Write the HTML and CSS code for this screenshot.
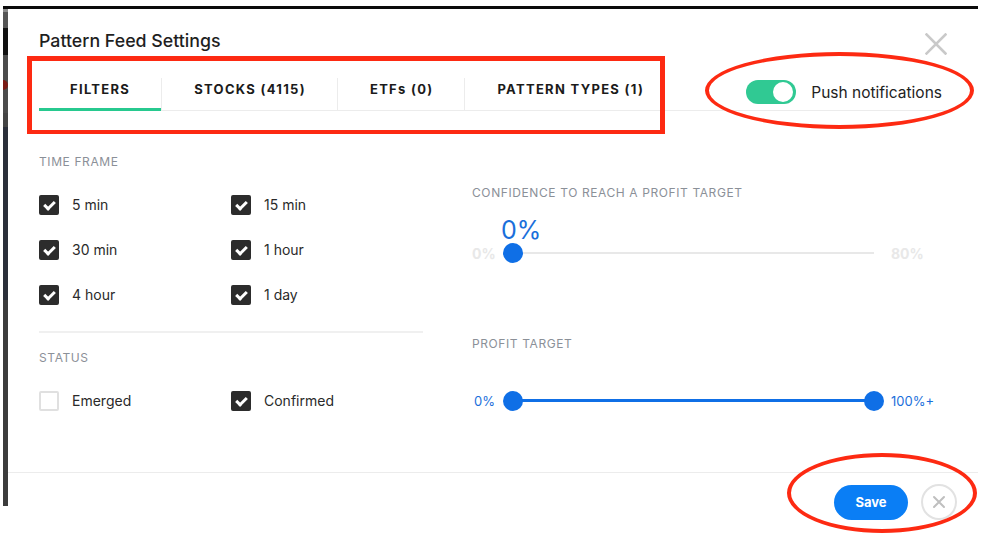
FILE: index.html
```html
<!DOCTYPE html>
<html lang="en">
<head>
    <meta charset="UTF-8">
    <title>Pattern Feed Settings</title>
    <link rel="stylesheet" href="styles.css">
</head>
<body>
    <div class="screen">
        <div class="backdrop-strip">
            <span class="seg seg-a"></span>
            <span class="seg seg-b"></span>
            <span class="seg seg-c"></span>
            <span class="seg seg-d"><i class="dot"></i></span>
            <span class="seg seg-e"></span>
            <span class="seg seg-f"></span>
            <span class="seg seg-g"></span>
        </div>

        <div class="modal">
            <div class="modal-header">
                <div class="title-row">
                    <h2 class="modal-title">Pattern Feed Settings</h2>
                    <button class="close-btn" aria-label="Close">
                        <svg width="22" height="22" viewBox="0 0 22 22">
                            <path d="M1.5 1.5 L20.5 20.5 M20.5 1.5 L1.5 20.5" stroke="#c9c9c9" stroke-width="2.6" stroke-linecap="square"/>
                        </svg>
                    </button>
                </div>

                <div class="tabs-row">
                    <ul class="tabs">
                        <li class="tab active">FILTERS</li>
                        <li class="tab">STOCKS (4115)</li>
                        <li class="tab">ETFs (0)</li>
                        <li class="tab">PATTERN TYPES (1)</li>
                    </ul>
                    <label class="push">
                        <span class="switch on"><span class="knob"></span></span>
                        Push notifications
                    </label>
                </div>
            </div>

            <div class="modal-body">
                <div class="filters-col">
                    <div class="section-label">TIME FRAME</div>
                    <div class="check-grid">
                        <label class="check"><span class="box checked"></span>5 min</label>
                        <label class="check"><span class="box checked"></span>15 min</label>
                        <label class="check"><span class="box checked"></span>30 min</label>
                        <label class="check"><span class="box checked"></span>1 hour</label>
                        <label class="check"><span class="box checked"></span>4 hour</label>
                        <label class="check"><span class="box checked"></span>1 day</label>
                    </div>

                    <div class="divider"></div>

                    <div class="section-label">STATUS</div>
                    <div class="check-grid">
                        <label class="check"><span class="box"></span>Emerged</label>
                        <label class="check"><span class="box checked"></span>Confirmed</label>
                    </div>
                </div>

                <div class="sliders-col">
                    <div class="section-label">CONFIDENCE TO REACH A PROFIT TARGET</div>
                    <div class="slider-value">0%</div>
                    <div class="slider slider-muted">
                        <span class="slider-min">0%</span>
                        <div class="track">
                            <span class="thumb thumb-left"></span>
                        </div>
                        <span class="slider-max">80%</span>
                    </div>

                    <div class="section-label profit-label">PROFIT TARGET</div>
                    <div class="slider slider-range">
                        <span class="slider-min">0%</span>
                        <div class="track">
                            <span class="fill"></span>
                            <span class="thumb thumb-left"></span>
                            <span class="thumb thumb-right"></span>
                        </div>
                        <span class="slider-max">100%+</span>
                    </div>
                </div>
            </div>

            <div class="modal-footer">
                <button class="save-btn">Save</button>
                <button class="cancel-btn" aria-label="Cancel">
                    <svg width="14" height="14" viewBox="0 0 14 14">
                        <path d="M2 2 L12 12 M12 2 L2 12" stroke="#bfbfbf" stroke-width="2" stroke-linecap="round"/>
                    </svg>
                </button>
            </div>
        </div>
    </div>

    <!-- red review marks -->
    <div class="mark mark-tabs"></div>
    <div class="mark mark-ellipse mark-push"></div>
    <div class="mark mark-ellipse mark-footer"></div>
</body>
</html>
```

FILE: styles.css
```css
* {
    margin: 0;
    padding: 0;
    box-sizing: border-box;
}

body {
    font-family: 'Inter', 'Liberation Sans', sans-serif;
    background: #fff;
    color: #222;
    position: relative;
    width: 994px;
    height: 546px;
    overflow: hidden;
}

/* Frame around the dialog */
.screen {
    display: flex;
    align-items: flex-start;
    width: 975px;
    margin: 6px 0 0 3px;
    border-top: 3px solid #0b0b0b;
}

.backdrop-strip {
    width: 5px;
    height: 497px;
    display: flex;
    flex-direction: column;
    flex-shrink: 0;
}

.seg {
    display: block;
    position: relative;
}

.seg-a { height: 3px; background: #8a8a8a; }
.seg-b { height: 16px; background: #555; }
.seg-c { height: 27px; background: #111; }
.seg-d { height: 58px; background: #4b4b4b; }
.seg-e { height: 14px; background: #444; }
.seg-f { height: 173px; background: #2b2f3a; }
.seg-g { flex: 1; background: #3c3c3c; }

.seg-d .dot {
    position: absolute;
    left: 0;
    top: 25px;
    width: 5px;
    height: 10px;
    background: #7a1a14;
    border-radius: 0 5px 5px 0;
}

.modal {
    flex: 1;
    background: #fff;
}

/* Header */
.modal-header {
    padding: 22px 31px 0;
}

.title-row {
    display: flex;
    justify-content: space-between;
    align-items: flex-start;
    height: 24px;
}

.modal-title {
    font-size: 17.8px;
    font-weight: 500;
    line-height: 20px;
    color: #1f1f1f;
}

.close-btn {
    border: none;
    background: none;
    width: 22px;
    height: 22px;
    margin-top: 2px;
    cursor: pointer;
}

.close-btn svg {
    display: block;
}

.tabs-row {
    display: flex;
    justify-content: space-between;
    align-items: flex-start;
    margin-top: 23px;
    border-bottom: 1px solid #ececec;
}

.tabs {
    display: flex;
    list-style: none;
}

.tab {
    position: relative;
    height: 32px;
    padding: 0 31px 10px 32px;
    line-height: 22px;
    font-size: 13px;
    font-weight: 700;
    letter-spacing: 1.3px;
    color: #1b1b1b;
    border-left: 1px solid #ececec;
}

.tab:first-child {
    padding-left: 31px;
    border-left: none;
}

.tab.active::after {
    content: '';
    position: absolute;
    left: 0;
    right: 0;
    bottom: -1px;
    height: 3px;
    background: #27c98f;
}

.push {
    display: flex;
    align-items: center;
    gap: 15px;
    margin: 2px 5px 0 0;
    font-size: 15.5px;
    color: #222;
}

.switch {
    width: 50px;
    height: 24px;
    border-radius: 12px;
    background: #d5d5d5;
    display: flex;
    align-items: center;
    padding: 0 3px;
}

.switch.on {
    background: #30c993;
    justify-content: flex-end;
}

.knob {
    width: 20px;
    height: 20px;
    border-radius: 50%;
    background: #fff;
}

/* Body */
.modal-body {
    display: grid;
    grid-template-columns: 384px 1fr;
    column-gap: 49px;
    padding: 0 31px 49px;
}

.filters-col {
    padding-top: 43px;
}

.sliders-col {
    padding-top: 74px;
}

.section-label {
    font-size: 12px;
    line-height: 16px;
    letter-spacing: 0.6px;
    color: #8b9098;
}

.check-grid {
    display: grid;
    grid-template-columns: 192px 192px;
    grid-auto-rows: 45px;
    margin-top: 12px;
}

.check {
    display: flex;
    align-items: center;
    gap: 13px;
    font-size: 14px;
    color: #2a2a2a;
}

.box {
    position: relative;
    width: 20px;
    height: 20px;
    border: 2px solid #e0e0e0;
    border-radius: 2px;
    background: #fff;
}

.box.checked {
    background: #2c2c2c;
    border-color: #2c2c2c;
}

.box.checked::after {
    content: '';
    position: absolute;
    left: 5px;
    top: 2px;
    width: 4px;
    height: 8px;
    border-right: 3px solid #fff;
    border-bottom: 3px solid #fff;
    transform: rotate(45deg);
}

.divider {
    height: 2px;
    background: #f0f0f0;
    margin: 14px 0 17px;
}

/* Sliders */
.slider-value {
    margin: 15px 0 0 29px;
    font-size: 25px;
    line-height: 28px;
    color: #1a6fdb;
}

.slider {
    display: flex;
    align-items: center;
    height: 20px;
    margin-top: -1px;
    font-size: 13px;
}

.slider-min {
    width: 23px;
    margin-right: 8px;
    text-align: right;
}

.slider-max {
    margin-left: 7px;
}

.slider-muted .slider-min,
.slider-muted .slider-max {
    font-size: 14px;
    font-weight: 700;
    color: #e8e8e8;
}

.slider-range .slider-min,
.slider-range .slider-max {
    color: #1a6fdb;
}

.track {
    position: relative;
    width: 381px;
    height: 20px;
}

.track::before {
    content: '';
    position: absolute;
    left: 10px;
    right: 10px;
    top: 9px;
    height: 2px;
    background: #e8e8e8;
}

.fill {
    position: absolute;
    left: 10px;
    right: 10px;
    top: 8px;
    height: 3px;
    background: #0f6fe6;
}

.thumb {
    position: absolute;
    top: 0;
    width: 20px;
    height: 20px;
    border-radius: 50%;
    background: #0f6fe6;
}

.thumb-left { left: 0; }
.thumb-right { right: 0; }

.profit-label {
    margin-top: 73px;
}

.slider-range {
    margin-top: 39px;
}

/* Footer */
.modal-footer {
    display: flex;
    justify-content: flex-end;
    align-items: center;
    gap: 13px;
    padding: 11px 21px 0;
    border-top: 1px solid #ececec;
}

.save-btn {
    width: 74px;
    height: 35px;
    border: none;
    border-radius: 18px;
    background: #0a7ef5;
    color: #fff;
    font-family: inherit;
    font-size: 13px;
    font-weight: 700;
    cursor: pointer;
}

.cancel-btn {
    width: 36px;
    height: 36px;
    border: 2px solid #e2e2e2;
    border-radius: 50%;
    background: #fff;
    display: flex;
    align-items: center;
    justify-content: center;
    cursor: pointer;
}

/* Red annotation marks */
.mark {
    position: absolute;
    border: 4px solid #fd2a12;
    pointer-events: none;
}

.mark-tabs {
    left: 27px;
    top: 56px;
    width: 638px;
    height: 78px;
    border-width: 5px 5px 4px 5px;
}

.mark-ellipse {
    border-radius: 50%;
}

.mark-push {
    left: 705px;
    top: 52px;
    width: 269px;
    height: 77px;
}

.mark-footer {
    left: 787px;
    top: 453px;
    width: 190px;
    height: 80px;
}
```
